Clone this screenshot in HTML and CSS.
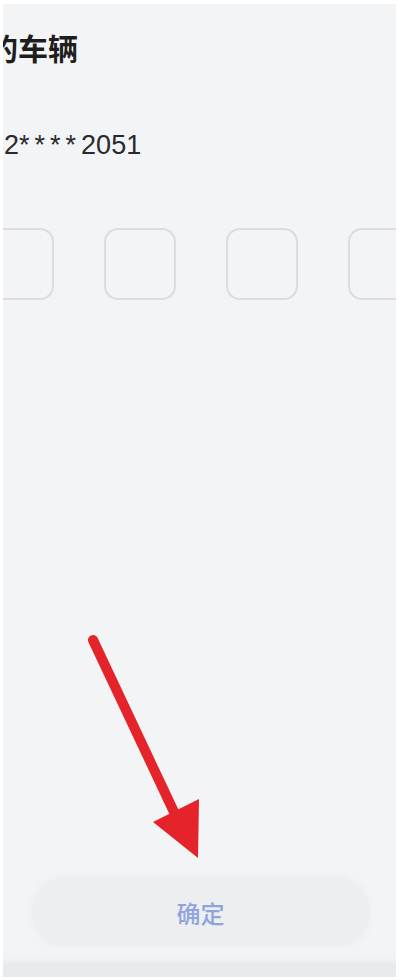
FILE: index.html
```html
<!DOCTYPE html>
<html lang="zh-CN">
<head>
<meta charset="UTF-8">
<title>绑定车辆</title>
<link rel="stylesheet" href="styles.css">
</head>
<body>
<div class="screen">
    <h1 class="title">的车辆</h1>
    <div class="phone">132<span class="stars">****</span>2051</div>
    <div class="codes">
        <div class="code"></div>
        <div class="code"></div>
        <div class="code"></div>
        <div class="code"></div>
    </div>
    <div class="spacer"></div>
    <button class="confirm">确定</button>
    <div class="home-bar"></div>

    <!-- 标注箭头 -->
    <svg class="arrow" width="400" height="980" viewBox="0 0 400 980">
        <line x1="93" y1="640" x2="174" y2="812" stroke="#e4232b" stroke-width="10" stroke-linecap="round"/>
        <polygon points="153,822 199,799 198,858" fill="#e4232b"/>
    </svg>
</div>
</body>
</html>
```

FILE: styles.css
```css
html, body {
    margin: 0;
    padding: 0;
    background-color: #fff;
    overflow: hidden;
}
body {
    font-family: "Liberation Sans", "Noto Sans CJK SC", sans-serif;
    color: #222;
    width: 400px;
    height: 980px;
}
.screen {
    margin: 4px 4px 0 3px;
    height: 973px;
    background-color: #f3f4f6;
    display: flex;
    flex-direction: column;
    overflow: hidden;
}
.title {
    margin: 26px 0 0 -15px;
    font-size: 30px;
    line-height: 40px;
    font-weight: 600;
    color: #1e1e1e;
    white-space: nowrap;
}
.phone {
    margin: 58px 0 0 -29px;
    font-size: 27px;
    line-height: 34px;
    color: #2a2a2a;
    white-space: nowrap;
}
.stars {
    letter-spacing: 5px;
}
.codes {
    display: flex;
    gap: 50px;
    margin: 66px 0 0 -21px;
}
.code {
    flex: 0 0 auto;
    width: 68px;
    height: 68px;
    border: 2px solid #dcdcde;
    border-radius: 14px;
}
.spacer {
    flex: 1;
}
.confirm {
    align-self: center;
    width: 338px;
    height: 70px;
    margin-left: 2px;
    border: none;
    border-radius: 35px;
    background-color: #edeef0;
    box-shadow: 0 0 6px 2px #eeeff1;
    color: #8fa4de;
    font-family: "Noto Sans CJK SC", sans-serif;
    font-size: 24px;
    font-weight: 500;
}
.home-bar {
    height: 30px;
    background: linear-gradient(to bottom, #f3f4f6 0%, #f1f2f4 40%, #e8e9eb 60%, #eaebed 100%);
}
.arrow {
    position: absolute;
    left: 0;
    top: 0;
    pointer-events: none;
}
```
